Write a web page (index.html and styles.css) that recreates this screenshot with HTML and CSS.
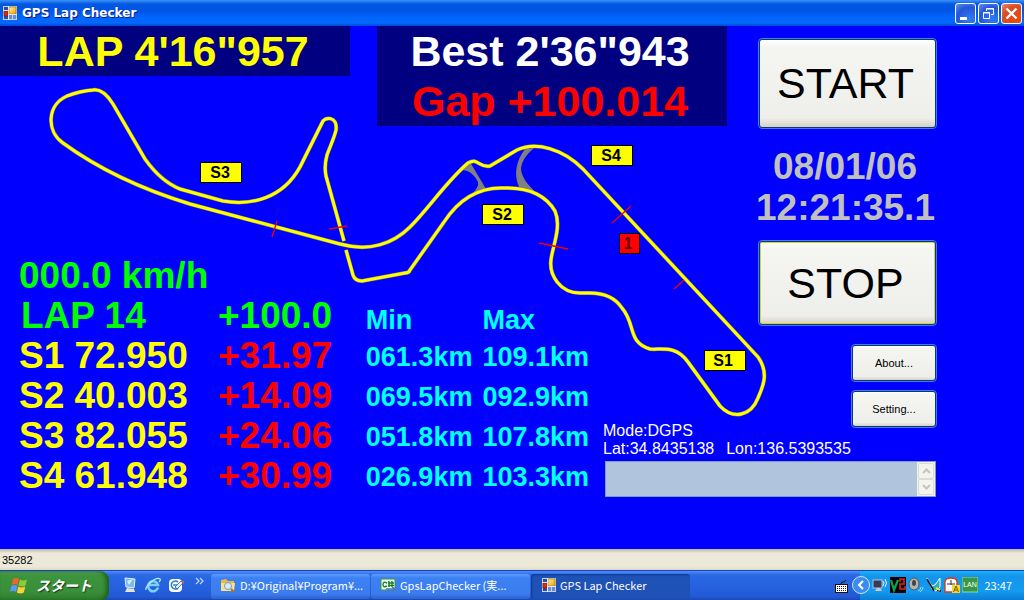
FILE: index.html
```html
<!DOCTYPE html>
<html lang="ja">
<head>
<meta charset="utf-8">
<title>GPS Lap Checker</title>
<link rel="stylesheet" href="styles.css">
</head>
<body>
<svg width="0" height="0" class="defs" aria-hidden="true">
  <defs>
    <linearGradient id="gold" x1="0" y1="0" x2="1" y2="1"><stop offset="0" stop-color="#fff3a8"/><stop offset="1" stop-color="#eba000"/></linearGradient>
    <symbol id="form-icon" viewBox="0 0 14 14">
      <rect width="14" height="14" fill="#d4cfc4"/>
      <path d="M1 1h4v3H1zM1 10h4v3H1z" fill="#1c50c0"/>
      <rect x="6" y="1" width="7" height="7" fill="url(#gold)" stroke="#9a6a10" stroke-width=".6"/>
      <rect x="1" y="5" width="4" height="5" fill="#d92c10" stroke="#701000" stroke-width=".6"/>
      <rect x="6" y="9" width="3" height="4" fill="#5c8ef0"/><rect x="10" y="9" width="3" height="4" fill="#5c8ef0"/>
      <path d="M0 4.500h5M5.500 0v14M5.500 8.500H14" stroke="#fff" stroke-width=".7"/>
    </symbol>
  </defs>
</svg>

<header class="titlebar">
  <svg class="app-icon"><use href="#form-icon"/></svg>
  <h1 class="title">GPS Lap Checker</h1>
  <div class="window-buttons">
    <button class="win-btn" aria-label="Minimize"><svg viewBox="0 0 19 19"><path d="M4 13h7v3H4z" fill="#fff"/></svg></button>
    <button class="win-btn" aria-label="Restore"><svg viewBox="0 0 19 19" fill="none" stroke="#fff"><path d="M7.500 7V4.500h7v6H12M7 5h8" /><path d="M4.500 8.500h6v6h-6zM4 9h7"/></svg></button>
    <button class="win-btn close" aria-label="Close"><svg viewBox="0 0 19 19"><path d="M4.500 4.500l10 10M14.500 4.500l-10 10" stroke="#fff" stroke-width="2.400"/></svg></button>
  </div>
</header>

<main class="dashboard">
  <svg class="track" viewBox="0 26 780 400" role="img" aria-label="Course map">
    <g fill="#808080">
      <path d="M462 168l8-6 16 27-13 4q6-6 5-11-6-12-16-12z"/>
      <path d="M525 149Q511 168 519 187L538 194Q521 180 521 168Q522 158 534 148z"/>
    </g>
    <path class="halo" d="M344 241L326 176Q324 166 327 155C329 149 335 136 336 130C338 116 324 116 322 123L300 167C283 198 252 206 223 201L180 189C165 183 155 173 145 159L113 104C106 93 99 89 93 90Q80 91 67 96C47 105 46 131 63 143Q115 181 190 204L340 244C369 252 393 244 410 227C429 208 446 182 468 163C478 157 478 168 490 166L517 150C536 141 563 149 583 169L758 357C770 374 762 388 758 398C751 416 733 420 720 406L688 362C676 345 662 350 650 349C627 342 636 324 622 308Q612 293 590 293L580 293C560 293 549 275 551 260C552 248 562 227 555 211C548 199 535 187 503 188Q467 187 444 222L410 270Q409 273 405 273L362 281Q355 281 353 275L346 250"/>
    <path class="road" d="M344 241L326 176Q324 166 327 155C329 149 335 136 336 130C338 116 324 116 322 123L300 167C283 198 252 206 223 201L180 189C165 183 155 173 145 159L113 104C106 93 99 89 93 90Q80 91 67 96C47 105 46 131 63 143Q115 181 190 204L340 244C369 252 393 244 410 227C429 208 446 182 468 163C478 157 478 168 490 166L517 150C536 141 563 149 583 169L758 357C770 374 762 388 758 398C751 416 733 420 720 406L688 362C676 345 662 350 650 349C627 342 636 324 622 308Q612 293 590 293L580 293C560 293 549 275 551 260C552 248 562 227 555 211C548 199 535 187 503 188Q467 187 444 222L410 270Q409 273 405 273L362 281Q355 281 353 275L346 250"/>
    <path d="M277 221l-5 16M329 229l18-3M539 243l29 6M631 206l-19 17M674 289l10-9" stroke="#f00000" stroke-width="1.300"/>
    <g class="tag">
      <rect x="200.500" y="162.500" width="41" height="20"/><text x="220" y="178">S3</text>
      <rect x="482.500" y="204.500" width="41" height="20"/><text x="502" y="220">S2</text>
      <rect x="591.500" y="145.500" width="41" height="20"/><text x="611" y="161">S4</text>
      <rect x="704.500" y="350.500" width="41" height="20"/><text x="723" y="366">S1</text>
    </g>
    <g class="tag car"><rect x="619.500" y="233.500" width="20" height="20"/><text x="628" y="249">1</text></g>
  </svg>

  <section class="panels">
    <div class="panel lap">LAP 4'16"957</div>
    <div class="panel best"><div>Best 2'36"943</div><div class="gap">Gap +100.014</div></div>
  </section>

  <section class="telemetry">
    <div class="timing">
      <div class="speed">000.0 km/h</div>
      <table class="sectors">
        <tr class="current"><th scope="row">LAP 14</th><td>+100.0</td></tr>
        <tr><th scope="row">S1 72.950</th><td>+31.97</td></tr>
        <tr><th scope="row">S2 40.003</th><td>+14.09</td></tr>
        <tr><th scope="row">S3 82.055</th><td>+24.06</td></tr>
        <tr><th scope="row">S4 61.948</th><td>+30.99</td></tr>
      </table>
    </div>
    <table class="speeds">
      <tr><th scope="col">Min</th><th scope="col">Max</th></tr>
      <tr><td>061.3km</td><td>109.1km</td></tr>
      <tr><td>069.5km</td><td>092.9km</td></tr>
      <tr><td>051.8km</td><td>107.8km</td></tr>
      <tr><td>026.9km</td><td>103.3km</td></tr>
    </table>
  </section>

  <section class="controls">
    <button class="xp-btn big">START</button>
    <div class="clock"><div>08/01/06</div><div>12:21:35.1</div></div>
    <button class="xp-btn big stop">STOP</button>
    <button class="xp-btn small">About...</button>
    <button class="xp-btn small">Setting...</button>
  </section>

  <section class="gps">
    <div>Mode:DGPS</div>
    <div class="position"><span>Lat:34.8435138</span><span>Lon:136.5393535</span></div>
    <div class="log">
      <textarea class="log-text" aria-label="Log" readonly></textarea>
      <div class="scroll">
        <button class="scroll-btn" aria-label="Scroll up"><svg viewBox="0 0 9 6"><path d="M1 5l3.500-3.500L8 5" fill="none" stroke="#c4c4ba" stroke-width="2"/></svg></button>
        <button class="scroll-btn" aria-label="Scroll down"><svg viewBox="0 0 9 6"><path d="M1 1l3.500 3.500L8 1" fill="none" stroke="#c4c4ba" stroke-width="2"/></svg></button>
      </div>
    </div>
  </section>
</main>

<div class="statusbar">35282</div>

<footer class="taskbar">
  <button class="start">
    <svg class="flag" viewBox="0 0 18 17">
      <path d="M3 2q3-2 6 0L7.500 8q-3-2-6 0z" fill="#f0642c"/>
      <path d="M10 2.500q3 2 7 0L15.500 8.500q-3 2-7 0z" fill="#8ccc3c"/>
      <path d="M1.300 9q3-2 6 0L6 15q-3-2-6 0z" fill="#5c98f4"/>
      <path d="M8.300 9.500q3 2 7 0L13.800 15.500q-3 2-7 0z" fill="#fcd038"/>
    </svg>
    <span>スタート</span>
  </button>
  <nav class="quick">
    <button class="icon-btn" aria-label="Show desktop"><svg viewBox="0 0 16 16"><path d="M3 1l10 1-1 9-8-1z" fill="#78b8f4" stroke="#e4f2ff"/><path d="M5 11l7 1 1 3H3z" fill="#e8e4d4"/><path d="M5 4l6-2-4 6z" fill="#d0ecff"/></svg></button>
    <button class="icon-btn" aria-label="Internet Explorer"><svg viewBox="0 0 16 16" fill="none"><path d="M13 10.500A5 5 0 1 1 13 8H4" stroke="#7cd0fc" stroke-width="2.600"/><path d="M1 13Q0 10 6 5T15 2q1 1-1 3" stroke="#b4ecff" stroke-width="1.200"/></svg></button>
    <button class="icon-btn" aria-label="Outlook Express"><svg viewBox="0 0 16 16"><rect x="1" y="2" width="13" height="13" rx="4" fill="#fff"/><path d="M10 11A4 4 0 1 1 10 5M5 8h6" fill="none" stroke="#2884cc" stroke-width="1.700"/><path d="M7 10l6-6 2 2-6 6z" fill="#d8ecff" stroke="#245c94" stroke-width=".8"/><path d="M13 4h3v3z" fill="#f05820"/></svg></button>
    <button class="icon-btn more" aria-label="More"><svg viewBox="0 0 9 8" fill="none" stroke="#b4d4ff" stroke-width="1.300"><path d="M1 1l3 3-3 3M5 1l3 3-3 3"/></svg></button>
  </nav>
  <nav class="tasks">
    <button class="task"><svg class="task-icon" viewBox="0 0 16 16"><path d="M1 3l5-1 2 2h6v10H1z" fill="#f0b83c"/><path d="M1 6h14l-1 8H1z" fill="#fce088"/><circle cx="8" cy="9" r="3.500" fill="#d0ecff" stroke="#789cc0"/><path d="M11 12l3 3" stroke="#b07020" stroke-width="2"/></svg><span>D:¥Original¥Program¥...</span></button>
    <button class="task"><svg class="task-icon" viewBox="0 0 16 16"><rect x="1" y="2" width="14" height="11" fill="#f4fff0" stroke="#389840"/><path d="M7 6Q3 4 3 7.500T7 9M9 4v6M12 4v6M8 6h6M8 8.500h6" fill="none" stroke="#188030" stroke-width="1.400"/><path d="M6 12h8M12 10l3 2-3 3" fill="none" stroke="#4878c0" stroke-width="1.500"/></svg><span>GpsLapChecker (実...</span></button>
    <button class="task active"><svg class="task-icon form"><use href="#form-icon"/></svg><span>GPS Lap Checker</span></button>
  </nav>
  <button class="ime" aria-label="Keyboard"><svg viewBox="0 0 13 13"><path d="M6 4q0-2 2-2t3-2" fill="none" stroke="#111"/><rect x=".5" y="4.500" width="12" height="8" fill="#fff" stroke="#111"/><path d="M2 6.500h9M2 8.500h9M2 10.500h9" stroke="#111" stroke-dasharray="1 1"/></svg></button>
  <div class="tray">
    <button class="expand" aria-label="Show hidden icons"><svg viewBox="0 0 18 18"><circle cx="9" cy="9" r="8.500" fill="#3c8cf0" stroke="#c4e4ff"/><path d="M11 5L7 9l4 4" fill="none" stroke="#fff" stroke-width="2"/></svg></button>
    <svg class="tray-icon" viewBox="0 0 16 16"><rect x="1" y="3" width="9" height="8" fill="#343c5c" stroke="#b8c0d0"/><path d="M3 14h7l-2-3H5z" fill="#c8c8d0"/><path d="M11 4q2 2 0 5M13 2q3 4 0 8" fill="none" stroke="#e4f4ff"/></svg>
    <svg class="tray-icon" viewBox="0 0 16 16"><rect width="16" height="16" fill="#000"/><path d="M1 3l3 10 4-10" fill="none" stroke="#08a848" stroke-width="2.200"/><path d="M10 5V2h4v5h-4v5h5v-3" fill="none" stroke="#e82020" stroke-width="1.500"/></svg>
    <svg class="tray-icon" viewBox="0 0 16 16"><ellipse cx="6" cy="7" rx="5" ry="6" fill="#b4b4b4" stroke="#555"/><ellipse cx="6" cy="6" rx="2" ry="3" fill="#444"/><path d="M10 14q3-1 3-4M12 15q3-2 3-5" fill="none" stroke="#9cd4ff"/></svg>
    <svg class="tray-icon" viewBox="0 0 16 16"><path d="M1 1l5 8 3-1 5-7v9l-4 4-4-2z" fill="#2cb0b0" stroke="#fff"/><path d="M1 2l7 12M11 13l4 1" stroke="#181818" stroke-width="1.500"/><path d="M10 11l4 2" stroke="#f8d840" stroke-width="2"/></svg>
    <svg class="tray-icon" viewBox="0 0 16 16"><path d="M1 15V5q0-4 6-4t6 4v10z" fill="#fff" stroke="#d83818" stroke-width="1.300"/><path d="M7 3v5M3 7h8" stroke="#333"/><rect x="8" y="8" width="8" height="8" fill="#f8d820"/><path d="M9.500 15L12 9l2.500 6M10 13h4" fill="none" stroke="#805800"/></svg>
    <svg class="tray-icon" viewBox="0 0 16 16"><rect width="16" height="15" fill="#389848" stroke="#90d898"/><text class="lan" x="8" y="10">LAN</text></svg>
    <time class="time">23:47</time>
  </div>
</footer>
</body>
</html>
```
FILE: styles.css
```css
* { box-sizing: border-box; }
body {
  margin: 0;
  min-height: 100vh;
  display: flex;
  flex-direction: column;
  background: #0000ff;
  font-family: "Liberation Sans", "Noto Sans CJK JP", sans-serif;
}
button { padding: 0; border: 0; background: none; color: inherit; font: inherit; }
.defs { position: absolute; }

.titlebar {
  display: flex;
  align-items: center;
  height: 26px;
  padding: 0 2px 0 3px;
  background: linear-gradient(#3b8dfb 0, #2f86f8 1px, #0058e0 4px, #0055e4 10px, #0066ff 18px, #0468ff 23px, #0048cc 26px);
}
.app-icon { width: 14px; height: 14px; }
.title {
  flex: 1;
  margin: 0 0 0 5px;
  color: #fff;
  font: bold 12px "DejaVu Sans", sans-serif;
  text-shadow: 1px 1px #0a1883;
}
.window-buttons { display: flex; gap: 2px; }
.win-btn {
  width: 21px;
  height: 21px;
  border: 1px solid #fff;
  border-radius: 3px;
  background: radial-gradient(circle at 70% 80%, #2f7cf8, #2456d8 60%, #6a8ff0);
}
.win-btn svg { display: block; width: 19px; height: 19px; }
.win-btn.close { background: radial-gradient(circle at 75% 80%, #f04808, #d84c24 60%, #e88c74); }

.dashboard {
  flex: 1;
  display: grid;
  grid-template-columns: 603px 1fr 180px;
  grid-template-rows: 100px 1fr auto;
  align-content: start;
  align-items: start;
  padding: 0 88px 52px 0;
}
.track { grid-area: 1 / 1 / 4 / 4; width: 780px; height: 400px; }
.halo, .road { fill: none; stroke-linejoin: round; }
.halo { stroke: #808068; stroke-width: 4px; }
.road { stroke: #ffff00; stroke-width: 3px; }
.tag rect { fill: #ffff00; stroke: #000; }
.tag text { font-size: 16px; font-weight: bold; text-anchor: middle; }
.tag.car rect { fill: #ff0000; }
.tag.car text { fill: #600000; }

.panels {
  grid-area: 1 / 1 / 2 / 3;
  z-index: 1;
  display: flex;
  align-items: flex-start;
  gap: 27px;
}
.panel {
  width: 350px;
  padding-right: 4px;
  background: #000080;
  color: #fff;
  font-size: 43px;
  font-weight: bold;
  line-height: 50px;
  text-align: center;
  white-space: nowrap;
}
.lap { color: #ffff00; }
.gap { color: #ff0000; }

.telemetry {
  grid-area: 2 / 1 / 4 / 2;
  z-index: 1;
  display: flex;
  align-items: flex-start;
  justify-content: space-between;
  padding: 130px 14px 0 19px;
  font-weight: bold;
}
.timing { font-size: 37px; line-height: 40px; white-space: nowrap; }
.speed { color: #00ff00; }
table { border-collapse: collapse; }
th, td { padding: 0; text-align: left; font-weight: bold; }
.sectors th { width: 199px; color: #ffff00; }
.sectors td { color: #ff0000; }
.sectors .current th, .sectors .current td { color: #00ff00; }
.sectors .current th { padding-left: 2px; }
.speeds { margin-top: 47px; color: #00ffff; font-size: 27px; line-height: 40px; }
.speeds th { line-height: 34px; }
.speeds th:first-child, .speeds td:first-child { padding-right: 10px; }

.controls {
  grid-area: 1 / 3 / 3 / 4;
  z-index: 1;
  display: flex;
  flex-direction: column;
  align-items: flex-end;
  padding-top: 13px;
}
.xp-btn {
  border: 1px solid #003c74;
  border-radius: 3px;
  outline: 1px solid #4c78e8;
  background: linear-gradient(#fff, #f5f5f2 8%, #eeeeea 90%, #d6d0c5);
  color: #000;
}
.big { width: 177px; height: 89px; padding-right: 4px; font-size: 43px; }
.stop { height: 84px; margin-bottom: 20px; box-shadow: inset 0 0 0 1px #d8d040; }
.small { width: 84px; height: 36px; margin-bottom: 10px; font-size: 11px; }
.clock {
  align-self: stretch;
  margin: 18px 0 13px;
  padding-right: 2px;
  color: #c0c0c0;
  font-size: 37px;
  font-weight: bold;
  line-height: 41px;
  text-align: center;
}

.gps {
  grid-area: 3 / 2 / 4 / 4;
  z-index: 1;
  margin-top: -17px;
  color: #fff;
  font-size: 16px;
  line-height: 18px;
  pointer-events: none;
}
.position { display: flex; gap: 12px; }
.log {
  display: flex;
  height: 36px;
  margin: 3px 0 0 2px;
  border: 1px solid #7f9db9;
  background: #b0c4de;
  pointer-events: auto;
}
.log-text { flex: 1; min-width: 0; padding: 2px; border: 0; outline: 0; background: none; resize: none; font-size: 12px; }
.scroll { display: flex; flex-direction: column; width: 18px; padding: 1px; background: #f0efe8; }
.scroll-btn { flex: 1; display: flex; align-items: center; justify-content: center; border: 1px solid #dcdcd0; border-radius: 2px; background: #f4f3ee; }
.scroll-btn svg { width: 9px; height: 6px; }

.statusbar {
  height: 22px;
  padding: 0 2px;
  border-bottom: 1px solid #1840c8;
  background: linear-gradient(#b8b49c, #ece9d8 4px, #ece9d8 18px, #dcd8c4);
  font-size: 11px;
  line-height: 22px;
}

.taskbar {
  display: flex;
  height: 30px;
  background: linear-gradient(#4d90f4, #2a68e4 4px, #245edb 20px, #2258d4 26px, #1941a5);
  color: #fff;
  font-family: "Noto Sans CJK JP", sans-serif;
  font-size: 11px;
}
.start {
  display: flex;
  align-items: center;
  gap: 8px;
  width: 109px;
  padding-left: 10px;
  padding-bottom: 2px;
  border-radius: 0 9px 9px 0;
  background: linear-gradient(#5aa45a, #3c943c 5px, #3a8f3a 20px, #2c7a2c);
  box-shadow: inset -3px 0 4px #1c601c;
  font-size: 14px;
  font-style: italic;
  font-weight: bold;
  text-shadow: 1px 1px 1px #163c16;
}
.start span { white-space: nowrap; }
.flag { width: 18px; height: 17px; }
.quick { display: flex; align-items: center; gap: 7px; width: 102px; padding: 0 0 2px 13px; }
.icon-btn, .icon-btn svg { display: block; width: 16px; height: 16px; }
.icon-btn.more { align-self: flex-start; margin: 6px 0 0 4px; }
.icon-btn.more, .icon-btn.more svg { width: 9px; height: 8px; }
.tasks { flex: 1; display: flex; align-items: center; gap: 1px; min-width: 0; }
.task {
  display: flex;
  align-items: center;
  gap: 4px;
  width: 159px;
  height: 25px;
  padding: 0 9px 2px;
  border-radius: 3px;
  background: linear-gradient(#5c9cfc, #3c81f3 4px, #3a7cee 20px, #2c62d0);
  text-align: left;
  white-space: nowrap;
}
.task.active { background: #1e52b7; box-shadow: inset 1px 1px 2px #123c8c; }
.task-icon { flex: none; width: 16px; height: 16px; }
.task-icon.form { width: 14px; height: 14px; margin-left: 2px; }
.ime { display: flex; align-items: center; margin-right: 12px; }
.ime svg { width: 13px; height: 13px; }
.tray {
  display: flex;
  align-items: center;
  gap: 2px;
  padding: 0 12px 2px 0;
  background: linear-gradient(#18b4f4, #1494ec 5px, #129cf0 20px, #0c78d0);
}
.expand { width: 18px; height: 18px; margin-left: -8px; }
.expand svg { display: block; width: 18px; height: 18px; }
.tray-icon { width: 16px; height: 16px; }
.lan { fill: #fff; font-size: 7px; font-family: "Liberation Sans", sans-serif; text-anchor: middle; }
.time { margin-left: 5px; font-size: 11px; }
```
